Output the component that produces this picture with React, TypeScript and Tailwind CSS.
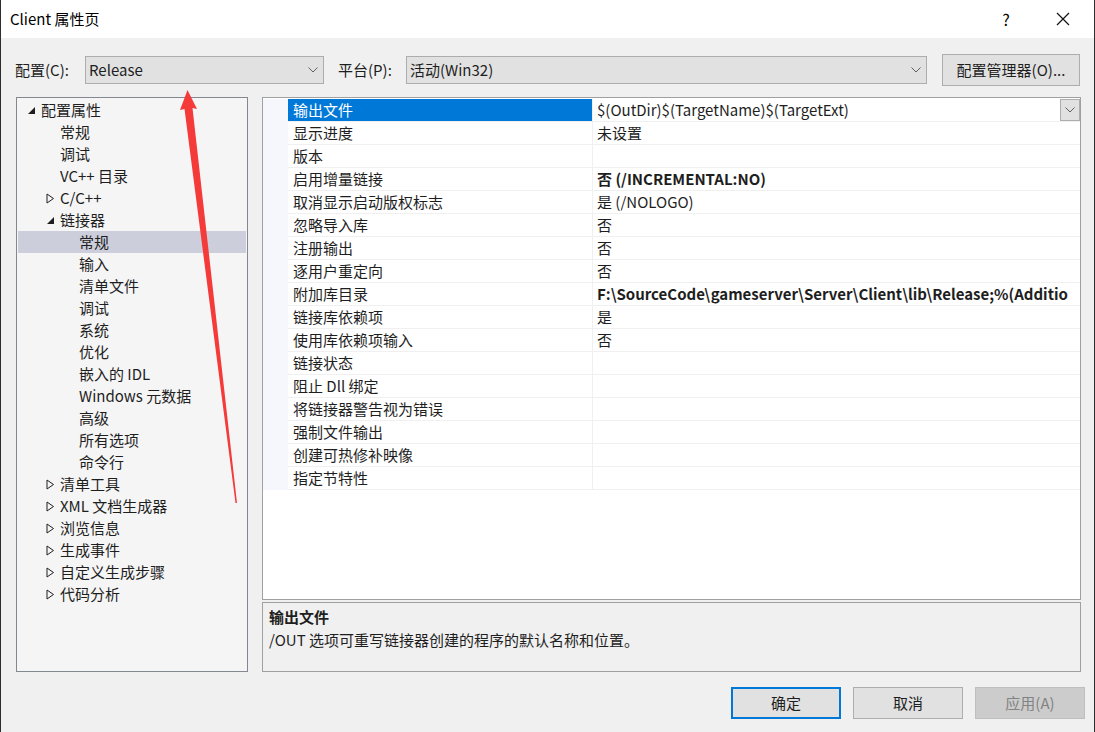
import React from "react";

const font = { fontFamily: '"Noto Sans CJK SC", "Noto Sans", sans-serif' };

type TreeItem = { label: string; level: number; arrow?: "open" | "closed"; selected?: boolean };

const tree: TreeItem[] = [
  { label: "配置属性", level: 0, arrow: "open" },
  { label: "常规", level: 1 },
  { label: "调试", level: 1 },
  { label: "VC++ 目录", level: 1 },
  { label: "C/C++", level: 1, arrow: "closed" },
  { label: "链接器", level: 1, arrow: "open" },
  { label: "常规", level: 2, selected: true },
  { label: "输入", level: 2 },
  { label: "清单文件", level: 2 },
  { label: "调试", level: 2 },
  { label: "系统", level: 2 },
  { label: "优化", level: 2 },
  { label: "嵌入的 IDL", level: 2 },
  { label: "Windows 元数据", level: 2 },
  { label: "高级", level: 2 },
  { label: "所有选项", level: 2 },
  { label: "命令行", level: 2 },
  { label: "清单工具", level: 1, arrow: "closed" },
  { label: "XML 文档生成器", level: 1, arrow: "closed" },
  { label: "浏览信息", level: 1, arrow: "closed" },
  { label: "生成事件", level: 1, arrow: "closed" },
  { label: "自定义生成步骤", level: 1, arrow: "closed" },
  { label: "代码分析", level: 1, arrow: "closed" },
];

const props: { name: string; value: string; bold?: boolean }[] = [
  { name: "输出文件", value: "$(OutDir)$(TargetName)$(TargetExt)" },
  { name: "显示进度", value: "未设置" },
  { name: "版本", value: "" },
  { name: "启用增量链接", value: "否 (/INCREMENTAL:NO)", bold: true },
  { name: "取消显示启动版权标志", value: "是 (/NOLOGO)" },
  { name: "忽略导入库", value: "否" },
  { name: "注册输出", value: "否" },
  { name: "逐用户重定向", value: "否" },
  { name: "附加库目录", value: "F:\\SourceCode\\gameserver\\Server\\Client\\lib\\Release;%(Additio", bold: true },
  { name: "链接库依赖项", value: "是" },
  { name: "使用库依赖项输入", value: "否" },
  { name: "链接状态", value: "" },
  { name: "阻止 Dll 绑定", value: "" },
  { name: "将链接器警告视为错误", value: "" },
  { name: "强制文件输出", value: "" },
  { name: "创建可热修补映像", value: "" },
  { name: "指定节特性", value: "" },
];

const Chevron = () => (
  <svg width="10" height="6" viewBox="0 0 10 6" fill="none">
    <path d="M0.5 0.5 L5 5 L9.5 0.5" stroke="#606060" strokeWidth="1" />
  </svg>
);

const Arrow = ({ kind }: { kind: "open" | "closed" }) =>
  kind === "open" ? (
    <svg width="9" height="9" viewBox="0 0 9 9">
      <path d="M8 1 L8 8 L1 8 Z" fill="#1e1e1e" />
    </svg>
  ) : (
    <svg width="9" height="11" viewBox="0 0 9 11">
      <path d="M1 1 L7.5 5.5 L1 10 Z" fill="none" stroke="#1e1e1e" strokeWidth="1" />
    </svg>
  );

export default function App() {
  return (
    <div style={font} className="relative w-[1095px] h-[732px] bg-[#f0f0f0] border-x border-[#2e2e2e] text-[15px] text-[#1e1e1e] overflow-hidden">
      {/* title bar */}
      <div className="h-[38px] bg-white flex items-center pl-[9px]">
        <span className="text-[15px] text-black">Client 属性页</span>
        <div className="ml-auto flex items-center">
          <span className="w-[60px] text-center text-[16px] text-black">?</span>
          <svg width="14" height="14" viewBox="0 0 14 14" className="mr-[24px] ml-[20px]">
            <path d="M1 1 L13 13 M13 1 L1 13" stroke="#111" strokeWidth="1.2" />
          </svg>
        </div>
      </div>

      {/* config row */}
      <div className="mt-[16px] h-[32px] flex items-center">
        <span className="ml-[14px] w-[70px]">配置(C):</span>
        <div className="w-[239px] h-[28px] bg-[#e1e1e1] border border-[#adadad] flex items-center pl-[3px] pr-[5px]">
          <span>Release</span>
          <span className="ml-auto"><Chevron /></span>
        </div>
        <span className="ml-[14px] w-[68px]">平台(P):</span>
        <div className="w-[521px] h-[28px] bg-[#e1e1e1] border border-[#adadad] flex items-center pl-[3px] pr-[5px]">
          <span>活动(Win32)</span>
          <span className="ml-auto"><Chevron /></span>
        </div>
        <div className="ml-[15px] w-[138px] h-[32px] bg-[#e1e1e1] border border-[#adadad] flex items-center justify-center">
          配置管理器(O)...
        </div>
      </div>

      {/* main */}
      <div className="mt-[11px] flex ml-[15px] h-[575px]">
        {/* tree */}
        <div className="w-[232px] h-[575px] bg-[#f5f5f5] border border-[#828790] pt-[1px] px-px">
          {tree.map((t, i) => (
            <div key={i} className={"h-[22px] flex items-center " + (t.selected ? "bg-[#cccedb]" : "")}>
              <div className={t.level === 0 ? "w-[23px] pl-[9px]" : t.level === 1 ? "w-[42px] pl-[28px]" : "w-[61px]"}>
                {t.arrow && <Arrow kind={t.arrow} />}
              </div>
              <span className="whitespace-nowrap">{t.label}</span>
            </div>
          ))}
        </div>

        {/* right column */}
        <div className="ml-[14px] w-[819px] flex flex-col">
          <div className="h-[504px] bg-white border border-[#a0a0a0] pt-px overflow-hidden">
            {props.map((p, i) => (
              <div key={i} className="h-[23px] flex">
                <div className="w-[25px] bg-[#f5f7fc]" />
                <div className={"w-[304px] flex items-center pl-[5px] border-b border-[#f0f0f0] " + (i === 0 ? "bg-[#0078d7] text-white" : "")}>
                  {p.name}
                </div>
                <div className="w-px bg-[#f0f0f0]" />
                <div className="flex-1 flex items-center pl-[4px] border-b border-[#f0f0f0] overflow-hidden relative">
                  <span className={"whitespace-nowrap " + (p.bold ? "font-bold" : "")}>{p.value}</span>
                  {i === 0 && (
                    <div className="absolute right-0 top-0 w-[20px] h-[22px] bg-[#e1e1e1] border border-[#adadad] flex items-center justify-center">
                      <Chevron />
                    </div>
                  )}
                </div>
              </div>
            ))}
          </div>
          <div className="mt-[2px] h-[70px] bg-[#f0f0f0] border border-[#a0a0a0] px-[6px] pt-[3px]">
            <div className="font-bold leading-[22px]">输出文件</div>
            <div className="leading-[24px]">/OUT 选项可重写链接器创建的程序的默认名称和位置。</div>
          </div>
        </div>
      </div>

      {/* buttons */}
      <div className="mt-[15px] flex justify-end pr-[9px] gap-[12px]">
        <div className="w-[110px] h-[32px] bg-[#e1e1e1] border-2 border-[#0078d7] flex items-center justify-center">确定</div>
        <div className="w-[110px] h-[32px] bg-[#e1e1e1] border border-[#adadad] flex items-center justify-center">取消</div>
        <div className="w-[110px] h-[32px] bg-[#cccccc] border border-[#bfbfbf] flex items-center justify-center text-[#838383]">应用(A)</div>
      </div>

      {/* red annotation arrow */}
      <svg className="absolute left-0 top-0 pointer-events-none" width="1095" height="732" viewBox="0 0 1095 732">
        <path d="M186.5 90 L196 109 L191.5 108 L236 503 L234.5 503 L183.5 109 L179 110 Z" fill="#f53a3a" />
      </svg>
    </div>
  );
}
